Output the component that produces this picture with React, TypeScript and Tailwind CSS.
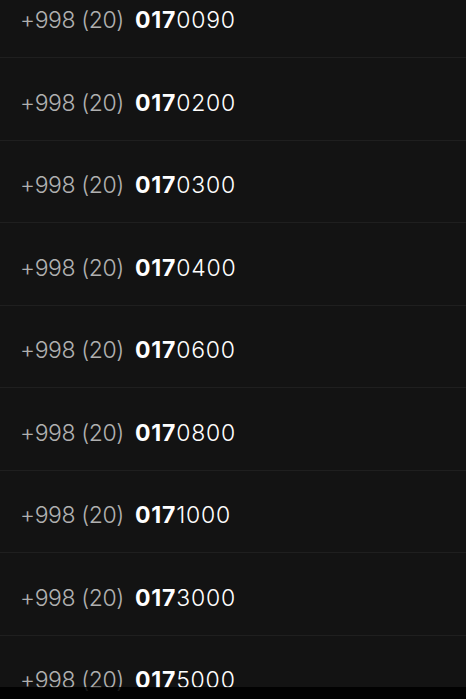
const numbers = [
  ["017", "0090"],
  ["017", "0200"],
  ["017", "0300"],
  ["017", "0400"],
  ["017", "0600"],
  ["017", "0800"],
  ["017", "1000"],
  ["017", "3000"],
  ["017", "5000"],
];

export default function App() {
  return (
    <div className="relative h-[699px] w-[466px] overflow-hidden bg-[#131313] font-['Inter',sans-serif]">
      <div className="-mt-[24.5px] flex flex-col">
        {numbers.map(([bold, rest]) => (
          <div
            key={bold + rest}
            className="flex h-[82.5px] items-center border-b border-[#1f1f1f] px-5 pt-2 text-[23px]"
          >
            <span className="font-light tracking-[-0.4px] text-[#b0b0b0]">+998 (20)</span>
            <span className="ml-[11px] tracking-[0.8px] text-white">
              <span className="font-bold">{bold}</span>
              <span className="font-light">{rest}</span>
            </span>
          </div>
        ))}
      </div>
      <div className="absolute bottom-0 left-0 right-0 h-[12px] bg-black/85" />
    </div>
  );
}
